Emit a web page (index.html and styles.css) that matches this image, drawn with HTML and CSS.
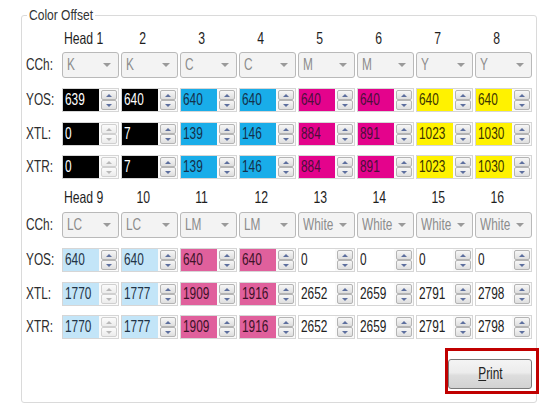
FILE: index.html
```html
<!DOCTYPE html>
<html>
<head>
<meta charset="utf-8">
<link rel="stylesheet" href="styles.css">
</head>
<body>
<div class="group">
  <div class="legend"><span class="t">Color Offset</span></div>

  <div class="row head first">
    <span class="lbl"></span>
    <span class="h"><span class="t">Head 1</span></span><span class="h"><span class="t">2</span></span><span class="h"><span class="t">3</span></span><span class="h"><span class="t">4</span></span>
    <span class="h"><span class="t">5</span></span><span class="h"><span class="t">6</span></span><span class="h"><span class="t">7</span></span><span class="h"><span class="t">8</span></span>
  </div>
  <div class="row cch">
    <span class="lbl"><span class="t">CCh:</span></span>
    <div class="combo"><span class="t">K</span><i></i></div>
    <div class="combo"><span class="t">K</span><i></i></div>
    <div class="combo"><span class="t">C</span><i></i></div>
    <div class="combo"><span class="t">C</span><i></i></div>
    <div class="combo"><span class="t">M</span><i></i></div>
    <div class="combo"><span class="t">M</span><i></i></div>
    <div class="combo"><span class="t">Y</span><i></i></div>
    <div class="combo"><span class="t">Y</span><i></i></div>
  </div>
  <div class="row num">
    <span class="lbl"><span class="t">YOS:</span></span>
    <div class="spinbox"><span class="field k"><span class="t">639</span></span><span class="spin"><b class="up"></b><b class="dn"></b></span></div>
    <div class="spinbox"><span class="field k"><span class="t">640</span></span><span class="spin"><b class="up"></b><b class="dn"></b></span></div>
    <div class="spinbox"><span class="field c"><span class="t">640</span></span><span class="spin"><b class="up"></b><b class="dn"></b></span></div>
    <div class="spinbox"><span class="field c"><span class="t">640</span></span><span class="spin"><b class="up"></b><b class="dn"></b></span></div>
    <div class="spinbox"><span class="field m"><span class="t">640</span></span><span class="spin"><b class="up"></b><b class="dn"></b></span></div>
    <div class="spinbox"><span class="field m"><span class="t">640</span></span><span class="spin"><b class="up"></b><b class="dn"></b></span></div>
    <div class="spinbox"><span class="field y"><span class="t">640</span></span><span class="spin"><b class="up"></b><b class="dn"></b></span></div>
    <div class="spinbox"><span class="field y"><span class="t">640</span></span><span class="spin"><b class="up"></b><b class="dn"></b></span></div>
  </div>
  <div class="row num">
    <span class="lbl"><span class="t">XTL:</span></span>
    <div class="spinbox"><span class="field k"><span class="t">0</span></span><span class="spin off"><b class="up"></b><b class="dn"></b></span></div>
    <div class="spinbox"><span class="field k"><span class="t">7</span></span><span class="spin"><b class="up"></b><b class="dn"></b></span></div>
    <div class="spinbox"><span class="field c"><span class="t">139</span></span><span class="spin"><b class="up"></b><b class="dn"></b></span></div>
    <div class="spinbox"><span class="field c"><span class="t">146</span></span><span class="spin"><b class="up"></b><b class="dn"></b></span></div>
    <div class="spinbox"><span class="field m"><span class="t">884</span></span><span class="spin"><b class="up"></b><b class="dn"></b></span></div>
    <div class="spinbox"><span class="field m"><span class="t">891</span></span><span class="spin"><b class="up"></b><b class="dn"></b></span></div>
    <div class="spinbox"><span class="field y"><span class="t">1023</span></span><span class="spin"><b class="up"></b><b class="dn"></b></span></div>
    <div class="spinbox"><span class="field y"><span class="t">1030</span></span><span class="spin"><b class="up"></b><b class="dn"></b></span></div>
  </div>
  <div class="row num last">
    <span class="lbl"><span class="t">XTR:</span></span>
    <div class="spinbox"><span class="field k"><span class="t">0</span></span><span class="spin off"><b class="up"></b><b class="dn"></b></span></div>
    <div class="spinbox"><span class="field k"><span class="t">7</span></span><span class="spin"><b class="up"></b><b class="dn"></b></span></div>
    <div class="spinbox"><span class="field c"><span class="t">139</span></span><span class="spin"><b class="up"></b><b class="dn"></b></span></div>
    <div class="spinbox"><span class="field c"><span class="t">146</span></span><span class="spin"><b class="up"></b><b class="dn"></b></span></div>
    <div class="spinbox"><span class="field m"><span class="t">884</span></span><span class="spin"><b class="up"></b><b class="dn"></b></span></div>
    <div class="spinbox"><span class="field m"><span class="t">891</span></span><span class="spin"><b class="up"></b><b class="dn"></b></span></div>
    <div class="spinbox"><span class="field y"><span class="t">1023</span></span><span class="spin"><b class="up"></b><b class="dn"></b></span></div>
    <div class="spinbox"><span class="field y"><span class="t">1030</span></span><span class="spin"><b class="up"></b><b class="dn"></b></span></div>
  </div>

  <div class="row head second">
    <span class="lbl"></span>
    <span class="h"><span class="t">Head 9</span></span><span class="h"><span class="t">10</span></span><span class="h"><span class="t">11</span></span><span class="h"><span class="t">12</span></span>
    <span class="h"><span class="t">13</span></span><span class="h"><span class="t">14</span></span><span class="h"><span class="t">15</span></span><span class="h"><span class="t">16</span></span>
  </div>
  <div class="row cch">
    <span class="lbl"><span class="t">CCh:</span></span>
    <div class="combo"><span class="t">LC</span><i></i></div>
    <div class="combo"><span class="t">LC</span><i></i></div>
    <div class="combo"><span class="t">LM</span><i></i></div>
    <div class="combo"><span class="t">LM</span><i></i></div>
    <div class="combo"><span class="t">White</span><i></i></div>
    <div class="combo"><span class="t">White</span><i></i></div>
    <div class="combo"><span class="t">White</span><i></i></div>
    <div class="combo"><span class="t">White</span><i></i></div>
  </div>
  <div class="row num">
    <span class="lbl"><span class="t">YOS:</span></span>
    <div class="spinbox"><span class="field lc"><span class="t">640</span></span><span class="spin"><b class="up"></b><b class="dn"></b></span></div>
    <div class="spinbox"><span class="field lc"><span class="t">640</span></span><span class="spin"><b class="up"></b><b class="dn"></b></span></div>
    <div class="spinbox"><span class="field lm"><span class="t">640</span></span><span class="spin"><b class="up"></b><b class="dn"></b></span></div>
    <div class="spinbox"><span class="field lm"><span class="t">640</span></span><span class="spin"><b class="up"></b><b class="dn"></b></span></div>
    <div class="spinbox"><span class="field w"><span class="t">0</span></span><span class="spin"><b class="up"></b><b class="dn"></b></span></div>
    <div class="spinbox"><span class="field w"><span class="t">0</span></span><span class="spin"><b class="up"></b><b class="dn"></b></span></div>
    <div class="spinbox"><span class="field w"><span class="t">0</span></span><span class="spin"><b class="up"></b><b class="dn"></b></span></div>
    <div class="spinbox"><span class="field w"><span class="t">0</span></span><span class="spin"><b class="up"></b><b class="dn"></b></span></div>
  </div>
  <div class="row num">
    <span class="lbl"><span class="t">XTL:</span></span>
    <div class="spinbox"><span class="field lc"><span class="t">1770</span></span><span class="spin off"><b class="up"></b><b class="dn"></b></span></div>
    <div class="spinbox"><span class="field lc"><span class="t">1777</span></span><span class="spin"><b class="up"></b><b class="dn"></b></span></div>
    <div class="spinbox"><span class="field lm"><span class="t">1909</span></span><span class="spin"><b class="up"></b><b class="dn"></b></span></div>
    <div class="spinbox"><span class="field lm"><span class="t">1916</span></span><span class="spin"><b class="up"></b><b class="dn"></b></span></div>
    <div class="spinbox"><span class="field w"><span class="t">2652</span></span><span class="spin"><b class="up"></b><b class="dn"></b></span></div>
    <div class="spinbox"><span class="field w"><span class="t">2659</span></span><span class="spin"><b class="up"></b><b class="dn"></b></span></div>
    <div class="spinbox"><span class="field w"><span class="t">2791</span></span><span class="spin"><b class="up"></b><b class="dn"></b></span></div>
    <div class="spinbox"><span class="field w"><span class="t">2798</span></span><span class="spin"><b class="up"></b><b class="dn"></b></span></div>
  </div>
  <div class="row num last">
    <span class="lbl"><span class="t">XTR:</span></span>
    <div class="spinbox"><span class="field lc"><span class="t">1770</span></span><span class="spin off"><b class="up"></b><b class="dn"></b></span></div>
    <div class="spinbox"><span class="field lc"><span class="t">1777</span></span><span class="spin"><b class="up"></b><b class="dn"></b></span></div>
    <div class="spinbox"><span class="field lm"><span class="t">1909</span></span><span class="spin"><b class="up"></b><b class="dn"></b></span></div>
    <div class="spinbox"><span class="field lm"><span class="t">1916</span></span><span class="spin"><b class="up"></b><b class="dn"></b></span></div>
    <div class="spinbox"><span class="field w"><span class="t">2652</span></span><span class="spin"><b class="up"></b><b class="dn"></b></span></div>
    <div class="spinbox"><span class="field w"><span class="t">2659</span></span><span class="spin"><b class="up"></b><b class="dn"></b></span></div>
    <div class="spinbox"><span class="field w"><span class="t">2791</span></span><span class="spin"><b class="up"></b><b class="dn"></b></span></div>
    <div class="spinbox"><span class="field w"><span class="t">2798</span></span><span class="spin"><b class="up"></b><b class="dn"></b></span></div>
  </div>

  <div class="actions">
    <div class="mark"><button class="btn"><span class="t"><u>P</u>rint</span></button></div>
  </div>
</div>
</body>
</html>
```

FILE: styles.css
```css
* { box-sizing: border-box; }

html, body {
  margin: 0;
  padding: 0;
  background: #ffffff;
}

body {
  width: 558px;
  height: 412px;
  overflow: hidden;
  font-family: "Liberation Sans", Arial, sans-serif;
  font-size: 16px;
  color: #2a2a2a;
}

/* horizontally condensed text, like the narrow UI font of the reference */
.t {
  display: inline-block;
  white-space: nowrap;
  transform: scaleX(0.74);
  transform-origin: left center;
}

.group {
  margin: 15px 0 0 21px;
  width: 516px;
  height: 388px;
  border: 1px solid #dadada;
  border-radius: 3px;
  padding: 0 0 0 3px;
  display: flex;
  flex-direction: column;
}

.legend {
  align-self: flex-start;
  width: 68px;
  margin: -9px 0 0 2px;
  padding: 0 2px;
  height: 16px;
  line-height: 16px;
  font-size: 14.5px;
  background: #ffffff;
  color: #333;
}
.legend .t { transform: scaleX(0.83); }

.row {
  display: grid;
  grid-template-columns: 35px repeat(8, 57px);
  column-gap: 2px;
  align-items: center;
}

.lbl {
  color: #2c2c2c;
  padding-left: 1px;
}

/* header rows */
.head { height: 20px; }
.head.first { margin-top: 5px; }
.head.second { margin-top: 8px; }
.h {
  width: 44px;
  display: flex;
  justify-content: center;
  font-size: 16.5px;
  color: #1e1e1e;
}
.h .t { transform-origin: center center; }

/* combo rows */
.cch { height: 26px; margin-top: 4px; }
.second + .cch { margin-top: 5px; }
.combo {
  height: 26px;
  border: 1px solid #b9b9b9;
  border-radius: 3px;
  background: #f3f3f3;
  display: flex;
  align-items: center;
  justify-content: space-between;
  padding: 0 7px 0 4px;
  color: #8c8c8c;
  overflow: hidden;
}
.combo .t { flex: none; width: 30px; }
.combo i {
  flex: none;
  width: 0;
  height: 0;
  border-left: 4px solid transparent;
  border-right: 4px solid transparent;
  border-top: 4px solid #9a9a9a;
}

/* numeric rows */
.num { height: 24px; margin-top: 10px; }
.num.last { margin-top: 9px; }
.spinbox {
  height: 24px;
  display: flex;
  border: 1px solid #d6d6d6;
  padding: 0 1px 0 0;
  background: #fafafa;
}
.field {
  flex: 1;
  min-width: 0;
  display: flex;
  align-items: center;
  padding-left: 2px;
  margin-right: 2px;
  color: #222222;
  overflow: hidden;
}
.field.k { background: #000000; color: #ffffff; }
.field.c { background: #19ade9; color: #14304a; }
.field.m { background: #e4038c; color: #4a0f3a; }
.field.y { background: #fff200; color: #3a3400; }
.field.lc { background: #c3e5f8; color: #1f3346; }
.field.lm { background: #e0609c; color: #3d1228; }
.field.w { background: #ffffff; color: #222222; }

.spin {
  flex: none;
  width: 16px;
  display: flex;
  flex-direction: column;
  padding: 1px 0;
}
.spin b {
  flex: 1;
  display: flex;
  align-items: center;
  justify-content: center;
  border: 1px solid #b4b4b4;
  border-radius: 2px;
  background: linear-gradient(#f7f7f7, #dedede);
}
.spin b::after {
  content: "";
  width: 0;
  height: 0;
  border-left: 3px solid transparent;
  border-right: 3px solid transparent;
}
.spin .up::after { border-bottom: 3px solid #5d6f9e; }
.spin .dn::after { border-top: 3px solid #5d6f9e; }
.spin.off b { border-color: #d0d0d0; background: linear-gradient(#fbfbfb, #ececec); }
.spin.off .up::after { border-bottom-color: #b8b8b8; }
.spin.off .dn::after { border-top-color: #b8b8b8; }

/* print */
.actions {
  display: flex;
  justify-content: flex-end;
  margin-top: 9px;
}
.mark {
  border: 3px solid #c00000;
  padding: 8px 4px 2px 0;
  margin-right: -3px;
}
.btn {
  display: flex;
  align-items: center;
  justify-content: center;
  width: 84px;
  height: 30px;
  border: 1px solid #7a7a7a;
  border-radius: 3px;
  background: linear-gradient(#f4f4f4 0%, #ececec 45%, #dddddd 55%, #d2d2d2 100%);
  font-family: inherit;
  font-size: 16px;
  color: #222;
  padding: 0;
}
.btn .t { transform-origin: center center; }
.btn u { text-decoration: underline; }
```
